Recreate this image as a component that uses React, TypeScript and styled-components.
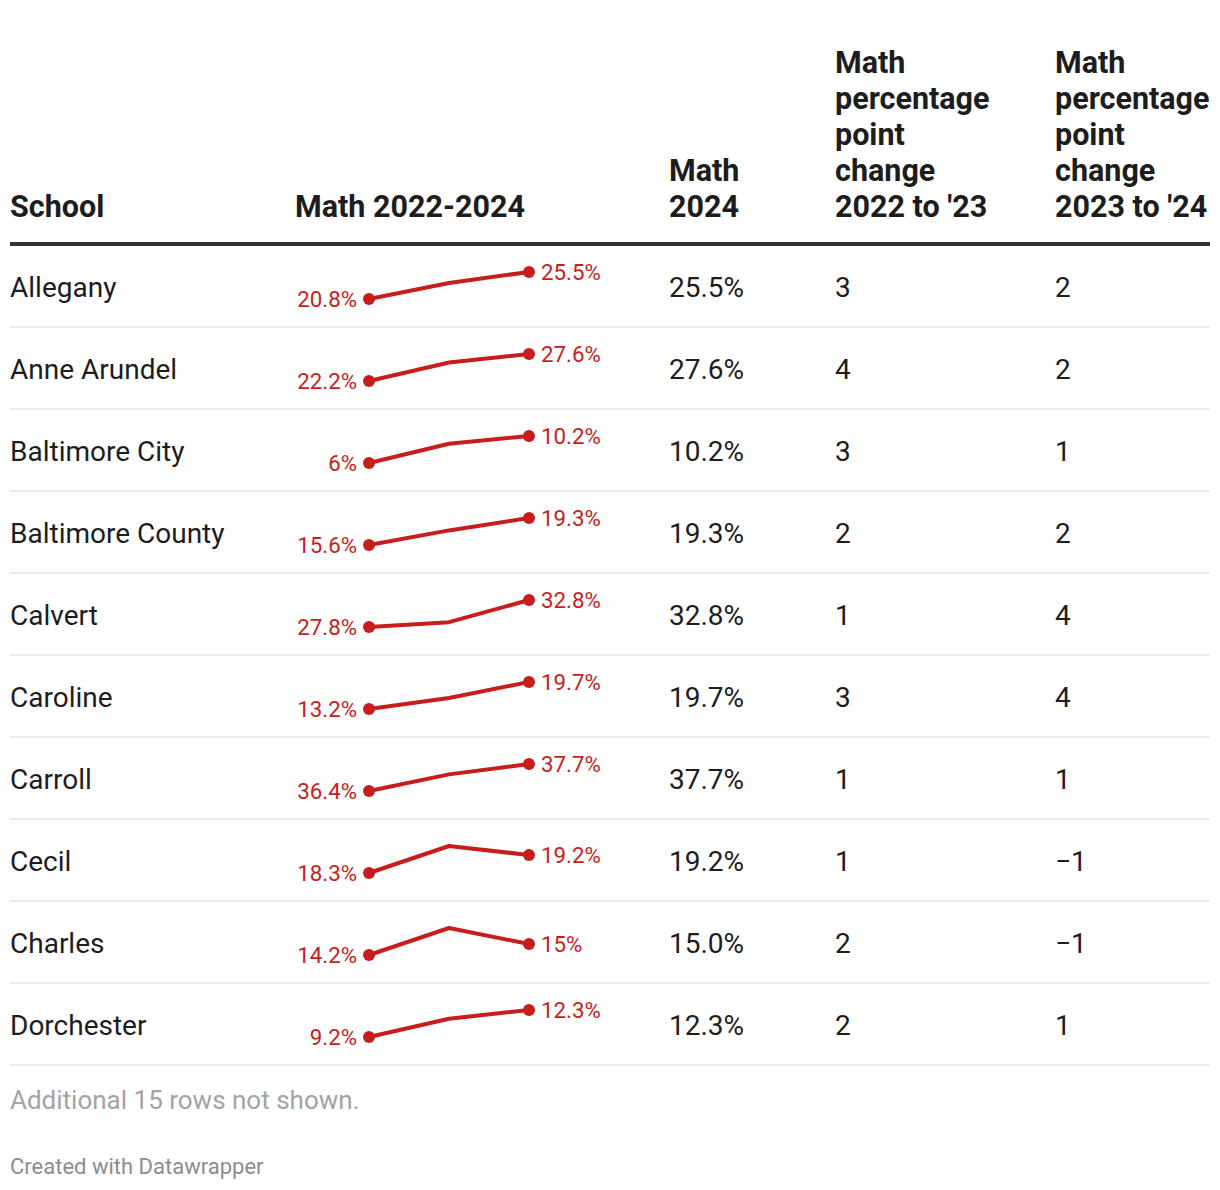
import styled, { createGlobalStyle } from "styled-components";

const red = "#c71e1d";
const ink = "#1d1d1d";

type Row = {
  school: string;
  values: [number, number, number];
  math2024: string;
  change23: string;
  change24: string;
  first?: string;
  last?: string;
};

const rows: Row[] = [
  { school: "Allegany", values: [20.8, 23.6, 25.5], math2024: "25.5%", change23: "3", change24: "2" },
  { school: "Anne Arundel", values: [22.2, 25.9, 27.6], math2024: "27.6%", change23: "4", change24: "2" },
  { school: "Baltimore City", values: [6, 9.0, 10.2], math2024: "10.2%", change23: "3", change24: "1", first: "6%" },
  { school: "Baltimore County", values: [15.6, 17.6, 19.3], math2024: "19.3%", change23: "2", change24: "2" },
  { school: "Calvert", values: [27.8, 28.7, 32.8], math2024: "32.8%", change23: "1", change24: "4" },
  { school: "Caroline", values: [13.2, 15.85, 19.7], math2024: "19.7%", change23: "3", change24: "4" },
  { school: "Carroll", values: [36.4, 37.2, 37.7], math2024: "37.7%", change23: "1", change24: "1" },
  { school: "Cecil", values: [18.3, 19.65, 19.2], math2024: "19.2%", change23: "1", change24: "\u22121" },
  { school: "Charles", values: [14.2, 16.17, 15.0], math2024: "15.0%", change23: "2", change24: "\u22121", last: "15%" },
  { school: "Dorchester", values: [9.2, 11.3, 12.3], math2024: "12.3%", change23: "2", change24: "1" },
];

const GlobalStyle = createGlobalStyle`
  body {
    margin: 0;
    background: #ffffff;
    font-family: Roboto, "Liberation Sans", sans-serif;
    color: ${ink};
  }
`;

const Page = styled.div`
  width: 1200px;
  padding: 45px 10px 0 10px;
`;

const Grid = styled.div`
  display: grid;
  grid-template-columns: 285px 374px 166px 220px 155px;
`;

const HeaderRow = styled(Grid)`
  align-items: end;
  padding-bottom: 17px;
  border-bottom: 4px solid #333333;
`;

const HeadCell = styled.div`
  font-weight: 700;
  font-size: 30.5px;
  line-height: 36px;
  color: ${ink};
  white-space: nowrap;
`;

const BodyRow = styled(Grid)`
  height: 80px;
  align-items: center;
  border-bottom: 2px solid #ececec;
`;

const Cell = styled.div`
  padding-top: 3px;
  font-size: 28px;
  line-height: 34px;
  color: ${ink};
  white-space: nowrap;
`;

const SparkCell = styled.div`
  height: 80px;
`;

const Note = styled.div`
  margin-top: 18px;
  font-size: 26px;
  line-height: 32px;
  color: #a3a3a3;
`;

const Credit = styled.div`
  margin-top: 37px;
  font-size: 22px;
  line-height: 28px;
  color: #8c8c8c;
`;

const xs = [74, 154, 234];
const top = 26;
const bottom = 53;

function Sparkline({ row }: { row: Row }) {
  const min = Math.min(...row.values);
  const max = Math.max(...row.values);
  const ys = row.values.map((v) => bottom - ((v - min) / (max - min)) * (bottom - top));
  const points = xs.map((x, i) => `${x},${ys[i]}`).join(" ");
  const first = row.first ?? `${row.values[0]}%`;
  const last = row.last ?? `${row.values[2]}%`;
  return (
    <svg width="374" height="80" viewBox="0 0 374 80">
      <polyline points={points} fill="none" stroke={red} strokeWidth="4" strokeLinejoin="round" strokeLinecap="round" />
      <circle cx={xs[0]} cy={ys[0]} r="6" fill={red} />
      <circle cx={xs[2]} cy={ys[2]} r="6" fill={red} />
      <text x="62" y={ys[0]} textAnchor="end" dominantBaseline="central" fontSize="22.3" fill={red} fontFamily="Roboto, sans-serif">
        {first}
      </text>
      <text x="246" y={ys[2]} textAnchor="start" dominantBaseline="central" fontSize="22.3" fill={red} fontFamily="Roboto, sans-serif">
        {last}
      </text>
    </svg>
  );
}

export default function App() {
  return (
    <Page>
      <GlobalStyle />
      <HeaderRow>
        <HeadCell>School</HeadCell>
        <HeadCell>Math 2022-2024</HeadCell>
        <HeadCell>
          Math
          <br />
          2024
        </HeadCell>
        <HeadCell>
          Math
          <br />
          percentage
          <br />
          point
          <br />
          change
          <br />
          2022 to '23
        </HeadCell>
        <HeadCell>
          Math
          <br />
          percentage
          <br />
          point
          <br />
          change
          <br />
          2023 to '24
        </HeadCell>
      </HeaderRow>
      {rows.map((row) => (
        <BodyRow key={row.school}>
          <Cell>{row.school}</Cell>
          <SparkCell>
            <Sparkline row={row} />
          </SparkCell>
          <Cell>{row.math2024}</Cell>
          <Cell>{row.change23}</Cell>
          <Cell>{row.change24}</Cell>
        </BodyRow>
      ))}
      <Note>Additional 15 rows not shown.</Note>
      <Credit>Created with Datawrapper</Credit>
    </Page>
  );
}
